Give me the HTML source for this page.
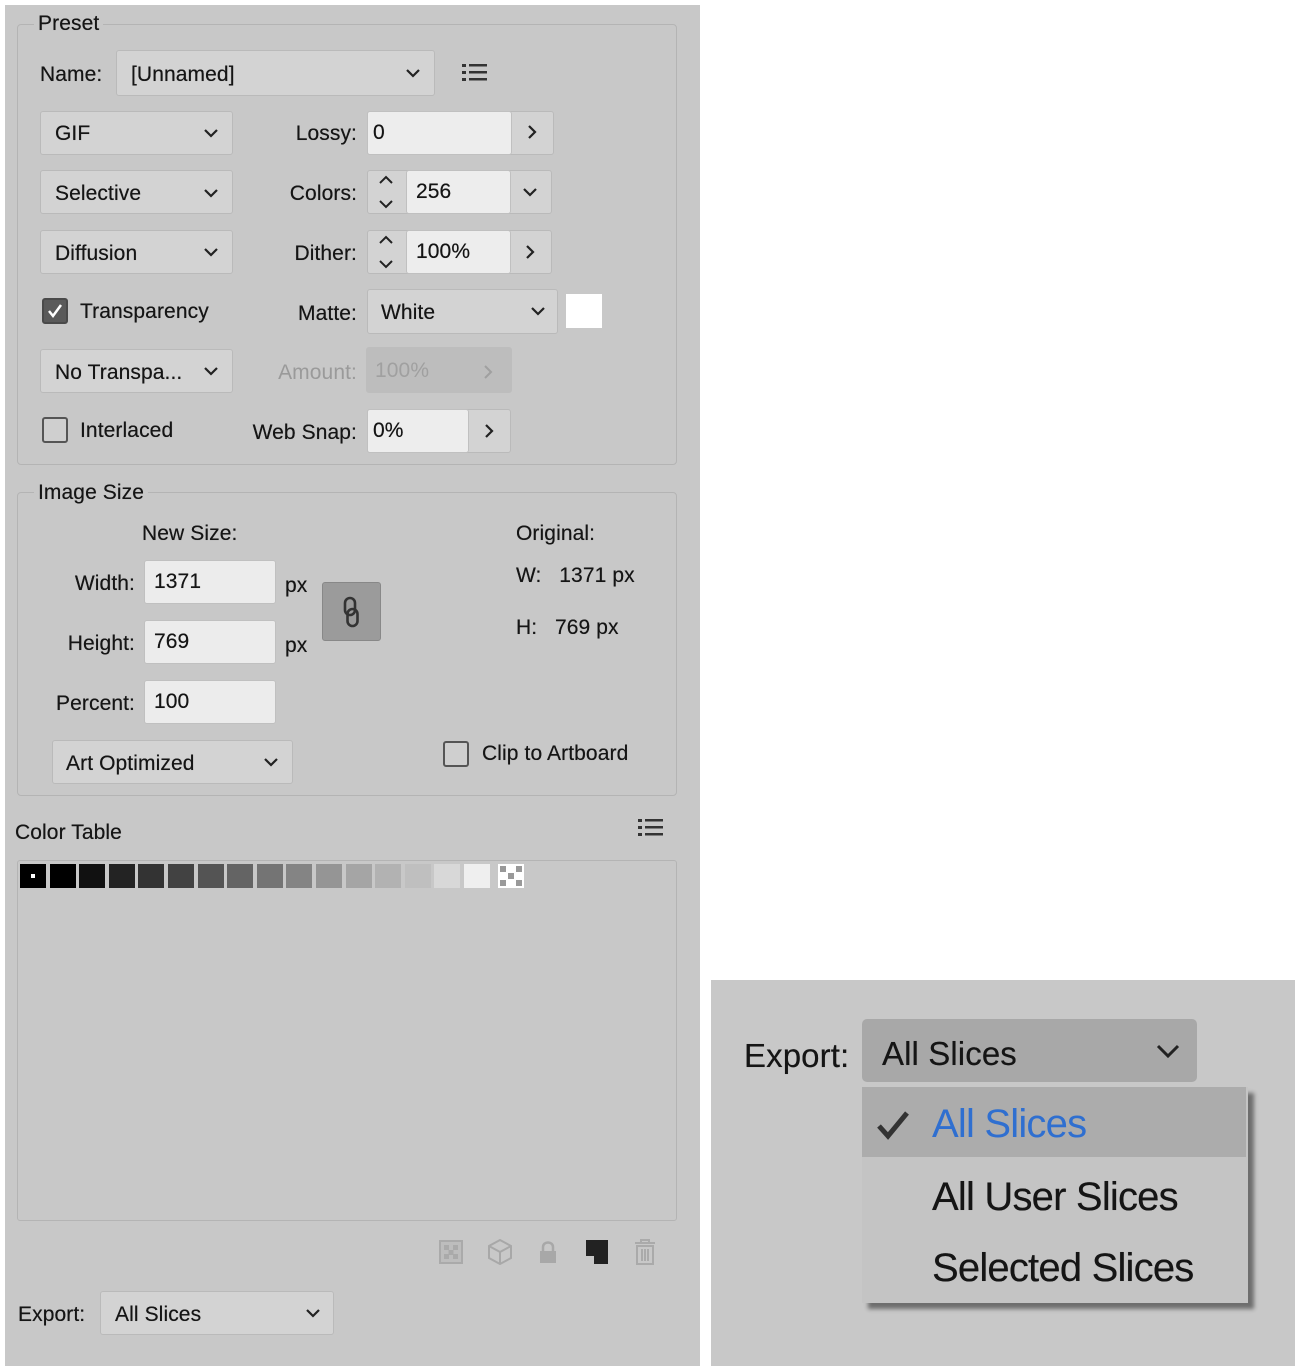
<!DOCTYPE html>
<html><head><meta charset="utf-8"><style>
*{box-sizing:border-box;margin:0;padding:0}
body{width:1300px;height:1371px;background:#fff;position:relative;overflow:hidden;font-family:"Liberation Sans",sans-serif;color:#151515;font-size:21px;letter-spacing:0.1px}
.a{position:absolute}
.t{position:absolute;line-height:24px;white-space:nowrap;transform:translateY(-12px);text-shadow:0 0 0.4px #222}
.r{text-align:right}
.dd{position:absolute;background:#d3d3d3;border:1px solid #bababa;border-radius:3px}
.inp{position:absolute;background:#ececec;border:1px solid #c0c0c0;border-radius:3px}
.seg{position:absolute;background:#d3d3d3;border:1px solid #bababa;border-radius:3px}
.fs{position:absolute;border:1px solid #b4b4b4;border-radius:4px}
.lg{position:absolute;background:#c8c8c8;padding:0 4px;line-height:24px}
svg{position:absolute;overflow:visible}
.cb{position:absolute;width:26px;height:26px;border:2px solid #555;border-radius:3px;background:#cfcfcf}
.sw{position:absolute;top:864px;width:26px;height:24px}
</style></head><body>
<div class="a" style="left:5px;top:5px;width:695px;height:1361px;background:#c8c8c8"></div>
<div class="a" style="left:711px;top:980px;width:584px;height:386px;background:#c8c8c8"></div>

<!-- Preset -->
<div class="fs" style="left:17px;top:24px;width:660px;height:441px"></div>
<div class="lg t" style="left:34px;top:24px">Preset</div>
<div class="t" style="left:40px;top:75px">Name:</div>
<div class="dd" style="left:116px;top:50px;width:319px;height:46px"></div>
<div class="t" style="left:131px;top:75px">[Unnamed]</div>
<svg style="left:405px;top:68px" width="16" height="10"><path d="M2 2 L8 8 L14 2" fill="none" stroke="#222" stroke-width="2.2"/></svg>
<svg style="left:462px;top:63px" width="26" height="20"><g fill="#333"><rect x="0" y="1" width="4" height="3"/><rect x="0" y="8" width="4" height="3"/><rect x="0" y="15" width="4" height="3"/><rect x="7" y="1" width="18" height="2.5"/><rect x="7" y="8" width="18" height="2.5"/><rect x="7" y="15" width="18" height="2.5"/></g></svg>

<div class="dd" style="left:40px;top:111px;width:193px;height:44px"></div><div class="t" style="left:55px;top:134px">GIF</div>
<svg style="left:203px;top:128px" width="16" height="10"><path d="M2 2 L8 8 L14 2" fill="none" stroke="#222" stroke-width="2.2"/></svg>
<div class="dd" style="left:40px;top:170px;width:193px;height:44px"></div><div class="t" style="left:55px;top:194px">Selective</div>
<svg style="left:203px;top:188px" width="16" height="10"><path d="M2 2 L8 8 L14 2" fill="none" stroke="#222" stroke-width="2.2"/></svg>
<div class="dd" style="left:40px;top:230px;width:193px;height:44px"></div><div class="t" style="left:55px;top:254px">Diffusion</div>
<svg style="left:203px;top:247px" width="16" height="10"><path d="M2 2 L8 8 L14 2" fill="none" stroke="#222" stroke-width="2.2"/></svg>

<div class="t r" style="left:200px;width:157px;top:134px">Lossy:</div>
<div class="seg" style="left:367px;top:111px;width:187px;height:44px"></div>
<div class="inp" style="left:367px;top:111px;width:145px;height:44px;background:#ededed"></div>
<div class="t" style="left:373px;top:133px">0</div>
<svg style="left:527px;top:124px" width="10" height="16"><path d="M2 2 L8 8 L2 14" fill="none" stroke="#222" stroke-width="2.2"/></svg>

<div class="t r" style="left:200px;width:157px;top:194px">Colors:</div>
<div class="seg" style="left:367px;top:170px;width:185px;height:44px"></div>
<div class="inp" style="left:406px;top:170px;width:105px;height:44px;background:#ededed"></div>
<div class="t" style="left:416px;top:192px">256</div>
<svg style="left:378px;top:174px" width="16" height="36"><path d="M2 9 L8 3 L14 9 M2 27 L8 33 L14 27" fill="none" stroke="#222" stroke-width="2"/></svg>
<svg style="left:522px;top:187px" width="16" height="10"><path d="M2 2 L8 8 L14 2" fill="none" stroke="#222" stroke-width="2.2"/></svg>

<div class="t r" style="left:200px;width:157px;top:254px">Dither:</div>
<div class="seg" style="left:367px;top:230px;width:185px;height:44px"></div>
<div class="inp" style="left:406px;top:230px;width:105px;height:44px;background:#ededed"></div>
<div class="t" style="left:416px;top:252px">100%</div>
<svg style="left:378px;top:234px" width="16" height="36"><path d="M2 9 L8 3 L14 9 M2 27 L8 33 L14 27" fill="none" stroke="#222" stroke-width="2"/></svg>
<svg style="left:525px;top:244px" width="10" height="16"><path d="M2 2 L8 8 L2 14" fill="none" stroke="#222" stroke-width="2.2"/></svg>

<div class="cb" style="left:42px;top:298px;background:#5a5a5a;border-color:#4a4a4a"></div>
<svg style="left:46px;top:302px" width="18" height="18"><path d="M3 9 L7 14 L15 3" fill="none" stroke="#fff" stroke-width="2.5"/></svg>
<div class="t" style="left:80px;top:312px">Transparency</div>
<div class="t r" style="left:200px;width:157px;top:314px">Matte:</div>
<div class="dd" style="left:367px;top:289px;width:191px;height:45px"></div><div class="t" style="left:381px;top:313px">White</div>
<svg style="left:530px;top:306px" width="16" height="10"><path d="M2 2 L8 8 L14 2" fill="none" stroke="#222" stroke-width="2.2"/></svg>
<div class="a" style="left:566px;top:294px;width:36px;height:34px;background:#fff"></div>

<div class="dd" style="left:40px;top:349px;width:193px;height:44px"></div><div class="t" style="left:55px;top:373px">No Transpa...</div>
<svg style="left:203px;top:366px" width="16" height="10"><path d="M2 2 L8 8 L14 2" fill="none" stroke="#222" stroke-width="2.2"/></svg>
<div class="t r" style="left:200px;width:157px;top:373px;color:#9a9a9a;text-shadow:none">Amount:</div>
<div class="a" style="left:366px;top:347px;width:146px;height:46px;background:#bdbdbd;border-radius:3px"></div>
<div class="t" style="left:375px;top:371px;color:#a0a0a0;text-shadow:none">100%</div>
<svg style="left:483px;top:364px" width="10" height="16"><path d="M2 2 L8 8 L2 14" fill="none" stroke="#a0a0a0" stroke-width="2"/></svg>

<div class="cb" style="left:42px;top:417px"></div>
<div class="t" style="left:80px;top:431px">Interlaced</div>
<div class="t r" style="left:200px;width:157px;top:433px">Web Snap:</div>
<div class="seg" style="left:367px;top:409px;width:144px;height:44px"></div>
<div class="inp" style="left:367px;top:409px;width:102px;height:44px;background:#ededed"></div>
<div class="t" style="left:373px;top:431px">0%</div>
<svg style="left:484px;top:423px" width="10" height="16"><path d="M2 2 L8 8 L2 14" fill="none" stroke="#222" stroke-width="2.2"/></svg>

<!-- Image Size -->
<div class="fs" style="left:17px;top:492px;width:660px;height:304px"></div>
<div class="lg t" style="left:34px;top:493px">Image Size</div>
<div class="t" style="left:142px;top:534px">New Size:</div>
<div class="t" style="left:516px;top:534px">Original:</div>
<div class="t r" style="left:30px;width:105px;top:584px">Width:</div>
<div class="inp" style="left:144px;top:560px;width:132px;height:44px"></div><div class="t" style="left:154px;top:582px">1371</div>
<div class="t" style="left:285px;top:586px">px</div>
<div class="t r" style="left:30px;width:105px;top:644px">Height:</div>
<div class="inp" style="left:144px;top:620px;width:132px;height:44px"></div><div class="t" style="left:154px;top:642px">769</div>
<div class="t" style="left:285px;top:646px">px</div>
<div class="t r" style="left:30px;width:105px;top:704px">Percent:</div>
<div class="inp" style="left:144px;top:680px;width:132px;height:44px"></div><div class="t" style="left:154px;top:702px">100</div>
<div class="a" style="left:322px;top:582px;width:59px;height:59px;background:#9b9b9b;border:1px solid #888;border-radius:3px"></div>
<svg style="left:342px;top:596px" width="18" height="32"><rect x="3" y="2" width="10" height="17" rx="5" fill="none" stroke="#333" stroke-width="2.6"/><rect x="5.5" y="13" width="10" height="17" rx="5" fill="none" stroke="#333" stroke-width="2.6"/></svg>
<div class="t" style="left:516px;top:576px">W:&nbsp;&nbsp;&nbsp;1371 px</div>
<div class="t" style="left:516px;top:628px">H:&nbsp;&nbsp;&nbsp;769 px</div>
<div class="dd" style="left:52px;top:740px;width:241px;height:44px"></div><div class="t" style="left:66px;top:764px">Art Optimized</div>
<svg style="left:263px;top:757px" width="16" height="10"><path d="M2 2 L8 8 L14 2" fill="none" stroke="#222" stroke-width="2.2"/></svg>
<div class="cb" style="left:443px;top:741px"></div>
<div class="t" style="left:482px;top:754px">Clip to Artboard</div>

<!-- Color Table -->
<div class="t" style="left:15px;top:833px">Color Table</div>
<svg style="left:638px;top:818px" width="26" height="20"><g fill="#333"><rect x="0" y="1" width="4" height="3"/><rect x="0" y="8" width="4" height="3"/><rect x="0" y="15" width="4" height="3"/><rect x="7" y="1" width="18" height="2.5"/><rect x="7" y="8" width="18" height="2.5"/><rect x="7" y="15" width="18" height="2.5"/></g></svg>
<div class="a" style="left:17px;top:860px;width:660px;height:361px;border:1px solid #b4b4b4;border-radius:3px"></div>
<div class="sw" style="left:20px;background:#000"></div><div class="a" style="left:31px;top:874px;width:4px;height:4px;background:#fff"></div>
<div class="sw" style="left:49.6px;background:#000"></div>
<div class="sw" style="left:79.2px;background:#111"></div>
<div class="sw" style="left:108.8px;background:#232323"></div>
<div class="sw" style="left:138.4px;background:#333"></div>
<div class="sw" style="left:168px;background:#424242"></div>
<div class="sw" style="left:197.6px;background:#545454"></div>
<div class="sw" style="left:227.2px;background:#646464"></div>
<div class="sw" style="left:256.8px;background:#747474"></div>
<div class="sw" style="left:286.4px;background:#848484"></div>
<div class="sw" style="left:316px;background:#959595"></div>
<div class="sw" style="left:345.6px;background:#a5a5a5"></div>
<div class="sw" style="left:375.2px;background:#b2b2b2"></div>
<div class="sw" style="left:404.8px;background:#bfbfbf"></div>
<div class="sw" style="left:434.4px;background:#d8d8d8"></div>
<div class="sw" style="left:464px;background:#efefef"></div>
<svg style="left:498px;top:864px" width="26" height="24"><rect width="26" height="24" fill="#fff"/><g fill="#999"><rect x="2" y="2" width="6" height="6"/><rect x="18" y="2" width="6" height="6"/><rect x="10" y="9" width="6" height="6"/><rect x="2" y="16" width="6" height="6"/><rect x="18" y="16" width="6" height="6"/></g></svg>

<!-- bottom icons -->
<svg style="left:439px;top:1240px" width="24" height="24"><rect x="1" y="1" width="22" height="22" fill="#bdbdbd" stroke="#aaa" stroke-width="2"/><g fill="#aaa"><rect x="5" y="5" width="5" height="5"/><rect x="14" y="5" width="5" height="5"/><rect x="9.5" y="10" width="5" height="5"/><rect x="5" y="14" width="5" height="5"/><rect x="14" y="14" width="5" height="5"/></g></svg>
<svg style="left:487px;top:1238px" width="26" height="28"><path d="M13 2 L24 8 L24 20 L13 26 L2 20 L2 8 Z M2 8 L13 14 L24 8 M13 14 L13 26" fill="none" stroke="#a8a8a8" stroke-width="2"/></svg>
<svg style="left:539px;top:1240px" width="18" height="24"><path d="M4 11 L4 7 C4 1 14 1 14 7 L14 11" fill="none" stroke="#a8a8a8" stroke-width="2.5"/><rect x="1" y="11" width="16" height="12" fill="#a8a8a8"/></svg>
<svg style="left:585px;top:1239px" width="24" height="26"><path d="M1 1 L23 1 L23 25 L9 25 L9 17 L1 17 Z" fill="#222"/></svg>
<svg style="left:633px;top:1238px" width="24" height="28"><path d="M2 5 L22 5 M8 5 L8 2 L16 2 L16 5 M4 8 L4 26 L20 26 L20 8 Z M9 11 L9 23 M12 11 L12 23 M15 11 L15 23" fill="none" stroke="#aaa" stroke-width="2"/></svg>

<div class="t" style="left:18px;top:1315px">Export:</div>
<div class="dd" style="left:100px;top:1291px;width:234px;height:44px"></div><div class="t" style="left:115px;top:1315px">All Slices</div>
<svg style="left:305px;top:1308px" width="16" height="10"><path d="M2 2 L8 8 L14 2" fill="none" stroke="#222" stroke-width="2.2"/></svg>

<!-- Right zoomed -->
<div class="t" style="left:744px;top:1056px;font-size:33px;line-height:36px;transform:translateY(-18px)">Export:</div>
<div class="a" style="left:862px;top:1019px;width:335px;height:63px;background:#a8a8a8;border-radius:5px"></div>
<div class="t" style="left:882px;top:1054px;font-size:33px;line-height:38px;transform:translateY(-19px)">All Slices</div>
<svg style="left:1155px;top:1043px" width="26" height="16"><path d="M3 3 L13 13 L23 3" fill="none" stroke="#222" stroke-width="3"/></svg>
<div class="a" style="left:862px;top:1087px;width:386px;height:216px;background:#c4c4c4;box-shadow:6px 6px 4px rgba(0,0,0,0.45)"></div>
<div class="a" style="left:862px;top:1087px;width:384px;height:70px;background:#acacac"></div>
<svg style="left:876px;top:1110px" width="34" height="30"><path d="M3 16 L12 26 L31 3" fill="none" stroke="#333" stroke-width="5"/></svg>
<div class="t" style="left:932px;top:1124px;font-size:40px;line-height:48px;transform:translateY(-24px);color:#2f6fd0;text-shadow:none;letter-spacing:-0.8px">All Slices</div>
<div class="t" style="left:932px;top:1197px;font-size:40px;line-height:48px;transform:translateY(-24px);letter-spacing:-0.8px">All User Slices</div>
<div class="t" style="left:932px;top:1268px;font-size:40px;line-height:48px;transform:translateY(-24px);letter-spacing:-0.8px">Selected Slices</div>
</body></html>
